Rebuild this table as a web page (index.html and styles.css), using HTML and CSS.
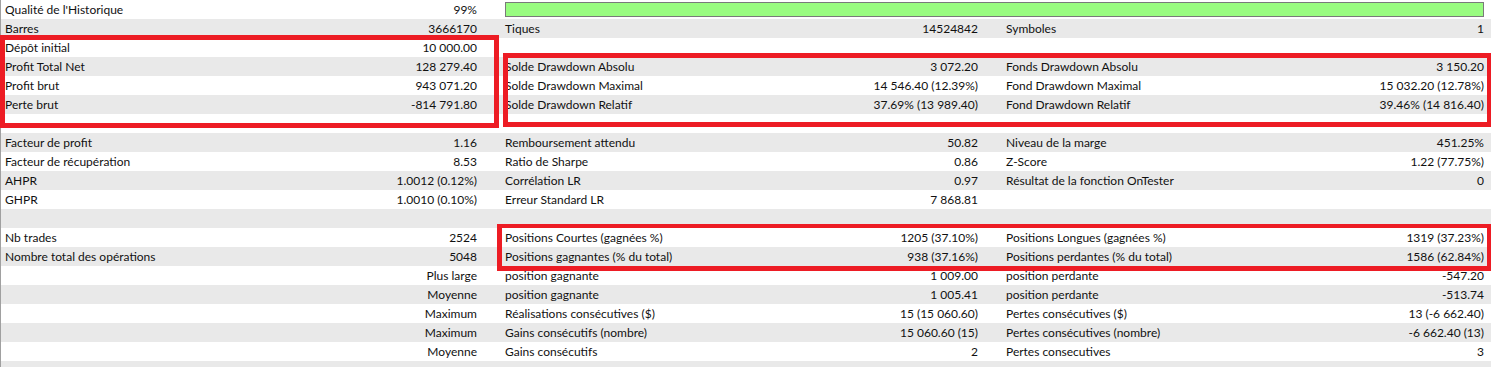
FILE: index.html
```html
<!DOCTYPE html>
<html lang="fr">
<head>
<meta charset="utf-8">
<title>Rapport</title>
<link rel="stylesheet" href="styles.css">
</head>
<body>
<div class="report">
  <div class="row">
    <div class="c"><span>Qualité de l'Historique</span><span>99%</span></div>
    <div class="c span2"><div class="quality"></div></div>
  </div>
  <div class="row">
    <div class="c"><span>Barres</span><span>3666170</span></div>
    <div class="c"><span>Tiques</span><span>14524842</span></div>
    <div class="c"><span>Symboles</span><span>1</span></div>
  </div>
  <div class="row">
    <div class="c"><span>Dépôt initial</span><span>10 000.00</span></div>
    <div class="c"></div><div class="c"></div>
  </div>
  <div class="row">
    <div class="c"><span>Profit Total Net</span><span>128 279.40</span></div>
    <div class="c"><span>Solde Drawdown Absolu</span><span>3 072.20</span></div>
    <div class="c"><span>Fonds Drawdown Absolu</span><span>3 150.20</span></div>
  </div>
  <div class="row">
    <div class="c"><span>Profit brut</span><span>943 071.20</span></div>
    <div class="c"><span>Solde Drawdown Maximal</span><span>14 546.40 (12.39%)</span></div>
    <div class="c"><span>Fond Drawdown Maximal</span><span>15 032.20 (12.78%)</span></div>
  </div>
  <div class="row">
    <div class="c"><span>Perte brut</span><span>-814 791.80</span></div>
    <div class="c"><span>Solde Drawdown Relatif</span><span>37.69% (13 989.40)</span></div>
    <div class="c"><span>Fond Drawdown Relatif</span><span>39.46% (14 816.40)</span></div>
  </div>
  <div class="row"><div class="c"></div><div class="c"></div><div class="c"></div></div>
  <div class="row">
    <div class="c"><span>Facteur de profit</span><span>1.16</span></div>
    <div class="c"><span>Remboursement attendu</span><span>50.82</span></div>
    <div class="c"><span>Niveau de la marge</span><span>451.25%</span></div>
  </div>
  <div class="row">
    <div class="c"><span>Facteur de récupération</span><span>8.53</span></div>
    <div class="c"><span>Ratio de Sharpe</span><span>0.86</span></div>
    <div class="c"><span>Z-Score</span><span>1.22 (77.75%)</span></div>
  </div>
  <div class="row">
    <div class="c"><span>AHPR</span><span>1.0012 (0.12%)</span></div>
    <div class="c"><span>Corrélation LR</span><span>0.97</span></div>
    <div class="c"><span>Résultat de la fonction OnTester</span><span>0</span></div>
  </div>
  <div class="row">
    <div class="c"><span>GHPR</span><span>1.0010 (0.10%)</span></div>
    <div class="c"><span>Erreur Standard LR</span><span>7 868.81</span></div>
    <div class="c"></div>
  </div>
  <div class="row"><div class="c"></div><div class="c"></div><div class="c"></div></div>
  <div class="row">
    <div class="c"><span>Nb trades</span><span>2524</span></div>
    <div class="c"><span>Positions Courtes (gagnées %)</span><span>1205 (37.10%)</span></div>
    <div class="c"><span>Positions Longues (gagnées %)</span><span>1319 (37.23%)</span></div>
  </div>
  <div class="row">
    <div class="c"><span>Nombre total des opérations</span><span>5048</span></div>
    <div class="c"><span>Positions gagnantes (% du total)</span><span>938 (37.16%)</span></div>
    <div class="c"><span>Positions perdantes (% du total)</span><span>1586 (62.84%)</span></div>
  </div>
  <div class="row">
    <div class="c"><span></span><span>Plus large</span></div>
    <div class="c"><span>position gagnante</span><span>1 009.00</span></div>
    <div class="c"><span>position perdante</span><span>-547.20</span></div>
  </div>
  <div class="row">
    <div class="c"><span></span><span>Moyenne</span></div>
    <div class="c"><span>position gagnante</span><span>1 005.41</span></div>
    <div class="c"><span>position perdante</span><span>-513.74</span></div>
  </div>
  <div class="row">
    <div class="c"><span></span><span>Maximum</span></div>
    <div class="c"><span>Réalisations consécutives ($)</span><span>15 (15 060.60)</span></div>
    <div class="c"><span>Pertes consécutives ($)</span><span>13 (-6 662.40)</span></div>
  </div>
  <div class="row">
    <div class="c"><span></span><span>Maximum</span></div>
    <div class="c"><span>Gains consécutifs (nombre)</span><span>15 060.60 (15)</span></div>
    <div class="c"><span>Pertes consécutives (nombre)</span><span>-6 662.40 (13)</span></div>
  </div>
  <div class="row">
    <div class="c"><span></span><span>Moyenne</span></div>
    <div class="c"><span>Gains consécutifs</span><span>2</span></div>
    <div class="c"><span>Pertes consecutives</span><span>3</span></div>
  </div>
  <div class="row"><div class="c"></div><div class="c"></div><div class="c"></div></div>

  <div class="mark mark-left"></div>
  <div class="mark mark-drawdown"></div>
  <div class="mark mark-positions"></div>
</div>
</body>
</html>
```
FILE: styles.css
```css
html, body {
  margin: 0;
  padding: 0;
  background: #ffffff;
}
body {
  font-family: Lato, "Liberation Sans", sans-serif;
  font-size: 12px;
  color: #111111;
  overflow: hidden;
}
.report {
  position: relative;
  border-left: 1px solid #a0a0a0;
  width: 1490px;
}
.row {
  display: grid;
  grid-template-columns: 500px 501px 489px;
  height: 19px;
  line-height: 19px;
}
.row:nth-child(even) {
  background: #e9e9e9;
}
.c {
  display: flex;
  justify-content: space-between;
  padding: 0 24px 0 4px;
  white-space: nowrap;
}
.c:last-child {
  padding-right: 7px;
}
.span2 {
  grid-column: 2 / 4;
  padding: 2px 4px 0 4px;
}
.quality {
  flex: 1;
  height: 13px;
  background: #99fc80;
  border: 1px solid #7a7a7a;
}
.mark {
  position: absolute;
  border: 5px solid #ed1c24;
  box-sizing: border-box;
}
.mark-left {
  left: -1px;
  top: 35px;
  width: 499px;
  height: 93px;
}
.mark-drawdown {
  left: 502px;
  top: 53px;
  width: 989px;
  height: 74px;
}
.mark-positions {
  left: 496px;
  top: 224px;
  width: 994px;
  height: 47px;
  border-width: 4px 4px 5px 5px;
}
```
